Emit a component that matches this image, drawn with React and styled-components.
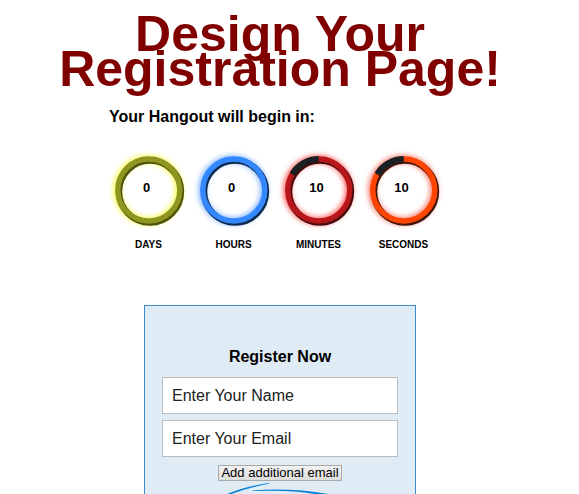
import React from "react";
import styled, { createGlobalStyle } from "styled-components";

const GlobalStyle = createGlobalStyle`
  * { box-sizing: border-box; }
  body {
    margin: 0;
    background: #fff;
    color: #000;
    font-family: "Liberation Sans", Arial, sans-serif;
    overflow: hidden;
  }
`;

const Page = styled.main`
  display: flex;
  flex-direction: column;
  align-items: center;
  height: 100vh;
  padding: 17px 19px 0 0;
  overflow: hidden;
`;

const Title = styled.h1`
  max-width: 500px;
  margin: 0;
  color: #800000;
  font-size: 50px;
  line-height: 35px;
  text-align: center;
`;

const Countdown = styled.section`
  width: 342px;
  max-width: 100%;
  margin-top: 20px;
`;

const CountdownTitle = styled.h2`
  margin: 0;
  font-size: 16px;
  line-height: 20px;
`;

const Dials = styled.div`
  display: flex;
  margin: 18px 0 0 -3px;
`;

const DialBox = styled.div`
  width: 85px;
  flex: none;
  text-align: center;
`;

const DialFace = styled.div`
  display: grid;
  place-items: center;
  height: 92px;

  > * { grid-area: 1 / 1; }
`;

const DialRing = styled.svg`
  display: block;
  overflow: visible;
`;

const DialValue = styled.span`
  padding: 0 4px 7px 0;
  font-size: 13px;
  line-height: 16px;
  font-weight: bold;
`;

const DialLabel = styled.div`
  font-size: 10px;
  line-height: 12px;
  font-weight: bold;
  margin-top: 2px;
`;

const Card = styled.form`
  display: flex;
  flex-direction: column;
  align-items: center;
  width: 272px;
  max-width: 100%;
  margin: 54px 0 0;
  padding: 41px 17px 0;
  border: 1px solid #428bca;
  background: #dfebf5;
  flex: 1 0 auto;
`;

const CardTitle = styled.h2`
  margin: 0 0 10px;
  font-size: 16px;
  line-height: 20px;
`;

const Field = styled.input`
  width: 100%;
  height: 37px;
  margin-bottom: 6px;
  padding: 0 9px;
  border: 1px solid #bbb;
  border-radius: 0;
  background: #fff;
  color: #222;
  font: 16px "Liberation Sans", Arial, sans-serif;

  &::placeholder { color: #222; opacity: 1; }
`;

const AddButton = styled.button`
  height: 16px;
  margin-top: 2px;
  padding: 0 2px;
  border: 1px solid #a9a9a9;
  border-radius: 0;
  background: linear-gradient(#f2f2f2, #dedede);
  color: #000;
  font: 13px/14px "Liberation Sans", Arial, sans-serif;
  white-space: nowrap;
`;

const Flourish = styled.svg`
  display: block;
  flex: none;
  margin-top: 1px;
`;

const RADIUS = 31;
const LENGTH = 2 * Math.PI * RADIUS;

const units = [
  { id: "days", label: "DAYS", value: 0, part: 1, color: "#8f9620", shade: "#4e5208", glow: "#f8fa60" },
  { id: "hours", label: "HOURS", value: 0, part: 1, color: "#3388ff", shade: "#10294c", glow: "#8fbcff" },
  { id: "minutes", label: "MINUTES", value: 10, part: 5 / 6, color: "#b8161a", shade: "#450a0c", glow: "#ff6868" },
  { id: "seconds", label: "SECONDS", value: 10, part: 5 / 6, color: "#ff4500", shade: "#40180c", glow: "#f88070" },
];

function Dial({ id, label, value, part, color, shade, glow }) {
  return (
    <DialBox>
      <DialFace>
        <DialRing width="84" height="84" viewBox="0 0 84 84" aria-hidden="true">
          <defs>
            <filter id={`glow-${id}`} x="-20%" y="-20%" width="140%" height="140%">
              <feGaussianBlur stdDeviation="2.5" />
            </filter>
            <filter id={`soft-${id}`}>
              <feGaussianBlur stdDeviation="0.5" />
            </filter>
          </defs>
          <g fill="none">
            <circle cx="41" cy="41" r={RADIUS} stroke={glow} strokeWidth="8" filter={`url(#glow-${id})`} />
            <circle cx="43" cy="42.6" r={RADIUS} stroke={shade} strokeWidth="6.4" filter={`url(#soft-${id})`} />
            {part < 1 && (
              <circle
                cx="41.8" cy="41" r={RADIUS}
                stroke="#1a2024"
                strokeWidth="6"
                strokeDasharray={`0 ${LENGTH * part} ${LENGTH * (1 - part)}`}
                transform="rotate(-90 41.8 41)"
              />
            )}
            <circle
              cx="41.8" cy="41" r={RADIUS}
              stroke={color}
              strokeWidth="5.4"
              strokeDasharray={`${LENGTH * part} ${LENGTH}`}
              transform="rotate(-90 41.8 41)"
            />
          </g>
        </DialRing>
        <DialValue>{value}</DialValue>
      </DialFace>
      <DialLabel>{label}</DialLabel>
    </DialBox>
  );
}

export default function App() {
  return (
    <>
      <GlobalStyle />
      <Page>
        <Title>Design Your Registration Page!</Title>
        <Countdown>
          <CountdownTitle>Your Hangout will begin in:</CountdownTitle>
          <Dials>
            {units.map((unit) => <Dial key={unit.id} {...unit} />)}
          </Dials>
        </Countdown>
        <Card>
          <CardTitle>Register Now</CardTitle>
          <Field type="text" aria-label="Name" placeholder="Enter Your Name" />
          <Field type="email" aria-label="Email" placeholder="Enter Your Email" />
          <AddButton type="button">Add additional email</AddButton>
          <Flourish width="140" height="12" viewBox="0 0 140 12" fill="#0a80d4" aria-hidden="true">
            <path d="M16 12.5 Q34 4.5 59 1 L59 1.7 Q38 5.5 20 12.5 Z" />
            <path d="M42 8.4 Q82 5.4 121 12.5 L108 12.5 Q84 8.6 62 8.8 L43 9 Z" />
          </Flourish>
        </Card>
      </Page>
    </>
  );
}
